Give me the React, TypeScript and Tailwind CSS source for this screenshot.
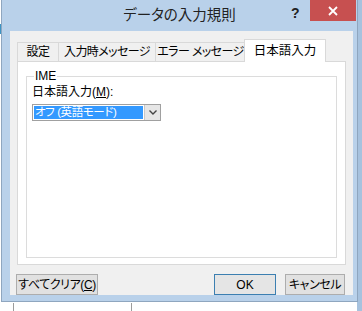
import React from "react";

const font = "font-['Liberation_Sans','Noto_Sans_CJK_JP',sans-serif]";
const jp = "[font-feature-settings:'palt'] whitespace-nowrap";

function Tab({ label, w, active }: { label: string; w: string; active?: boolean }) {
  if (active) {
    return (
      <div
        className={`${w} h-[23px] -mx-[2px] -mb-px relative z-10 flex items-center justify-center border border-b-0 border-[#d9d9d9] bg-white text-[12.5px] text-black ${jp}`}
      >
        {label}
      </div>
    );
  }
  return (
    <div
      className={`${w} h-[19px] flex items-center justify-center border border-b-0 border-l-0 first:border-l border-[#d9d9d9] bg-[#f0f0f0] text-[12px] tracking-[-0.6px] text-black ${jp}`}
    >
      {label}
    </div>
  );
}

function Button({ children, w, focused }: { children: React.ReactNode; w: string; focused?: boolean }) {
  return (
    <div
      className={`${w} h-[21px] flex items-center justify-center border text-[12px] text-black ${jp} ${
        focused ? "border-[#3c7fb1] bg-[#e5e5e5]" : "border-[#adadad] bg-[#e1e1e1]"
      }`}
    >
      {children}
    </div>
  );
}

export default function App() {
  return (
    <div className={`relative w-[362px] h-[311px] overflow-hidden bg-white ${font}`}>
      {/* sheet behind the dialog */}
      <div className="absolute right-0 top-0 w-[5px] h-full bg-[#a7c2de]" />
      <div className="absolute left-[13px] top-[303px] w-px h-[8px] bg-[#9c9c9c]" />
      <div className="absolute left-[131px] top-[303px] w-px h-[8px] bg-[#9c9c9c]" />
      <div className="absolute left-0 top-[24px] w-[2px] h-[10px] bg-[#3d95c4]" />

      {/* dialog window */}
      <div className="absolute left-[1px] top-0 w-[357px] h-[302px] flex flex-col border border-t-0 border-[#8fa6bf] bg-[#b9d1ea]">
        <div className="relative h-[31px] shrink-0">
          <div className={`absolute left-0 right-0 top-[5px] text-center text-[14.5px] text-[#222] ${jp}`}>
            データの入力規則
          </div>
          <div className="absolute left-[289px] top-[3px] text-[14px] font-bold text-[#222]">?</div>
          <div className="absolute right-[1px] top-0 w-[46px] h-[21px] bg-[#c75050] flex items-center justify-center">
            <svg width="10" height="10" viewBox="0 0 10 10">
              <path d="M1 1 L9 9 M9 1 L1 9" stroke="white" strokeWidth="1.8" />
            </svg>
          </div>
        </div>

        <div className="ml-[8px] mr-[4px] h-[264px] bg-[#f0f0f0] flex flex-col">
          {/* tabs */}
          <div className="mt-[8px] pl-[7px] flex items-end h-[22px]">
            <Tab label="設定" w="w-[42px]" />
            <Tab label="入力時メッセージ" w="w-[97px]" />
            <Tab label="エラー メッセージ" w="w-[90px]" />
            <Tab label="日本語入力" w="w-[82px]" active />
          </div>

          {/* panel */}
          <div className="ml-[7px] w-[329px] h-[204px] border border-[#d9d9d9] bg-white px-[8px] pt-[7px]">
            <fieldset className="h-[189px] border border-[#dcdcdc] px-[5px] text-[12px] text-black">
              <legend className="ml-[2px] px-[1px] leading-[14px]">IME</legend>
              <div className={`mt-[1px] leading-[16px] ${jp}`}>
                日本語入力(<span className="underline">M</span>):
              </div>
              <div className="mt-[4px] w-[129px] h-[17px] border border-[#a0a0a0] bg-white flex">
                <div className="flex-1 m-px bg-[#3399ff] text-white text-[11.5px] leading-[13px] pl-px overflow-hidden">
                  <span className={`${jp} tracking-[-0.4px]`}>オフ (英語モード)</span>
                </div>
                <div className="w-[16px] border-l border-[#c8c8c8] bg-[#e6e6e6] flex items-center justify-center">
                  <svg width="8" height="5" viewBox="0 0 8 5">
                    <path d="M0.5 0.5 L4 4 L7.5 0.5" stroke="#444" strokeWidth="1.4" fill="none" />
                  </svg>
                </div>
              </div>
            </fieldset>
          </div>

          {/* buttons */}
          <div className="mt-[9px] flex pl-[6px]">
            <Button w="w-[82px]">
              <span className="tracking-[-0.4px]">
                すべてクリア(<span className="underline">C</span>)
              </span>
            </Button>
            <div className="flex-1" />
            <Button w="w-[62px]" focused>
              OK
            </Button>
            <div className="w-[9px]" />
            <Button w="w-[60px]">
              <span className="tracking-[-0.4px]">キャンセル</span>
            </Button>
            <div className="w-[8px]" />
          </div>
        </div>
      </div>
    </div>
  );
}
